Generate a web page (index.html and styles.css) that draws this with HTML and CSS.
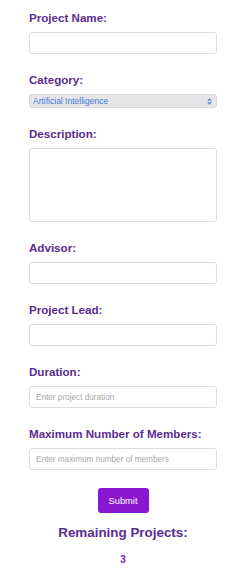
FILE: index.html
```html
<!DOCTYPE html>
<html>

<head>
    <title>New Project</title>
    <link rel="stylesheet" href="styles.css">
</head>

<body>
    <div class="wrapper">
        <form class="project_form" onsubmit="return false">
            <div class="field">
                <label for="name">Project Name:</label>
                <input type="text" id="name">
            </div>
            <div class="field">
                <label for="category">Category:</label>
                <div class="select_box">
                    <select id="category">
                        <option>Artificial Intelligence</option>
                        <option>Web Development</option>
                        <option>Data Science</option>
                    </select>
                    <svg class="chevron" width="5" height="7" viewBox="0 0 5 7">
                        <path d="M0.8 2.8 L2.5 1 L4.2 2.8 M0.8 4.2 L2.5 6 L4.2 4.2" fill="none" stroke="#4a7fd6" stroke-width="1.1" />
                    </svg>
                </div>
            </div>
            <div class="field">
                <label for="desc">Description:</label>
                <textarea id="desc"></textarea>
            </div>
            <div class="field">
                <label for="advisor">Advisor:</label>
                <input type="text" id="advisor">
            </div>
            <div class="field">
                <label for="lead">Project Lead:</label>
                <input type="text" id="lead">
            </div>
            <div class="field">
                <label for="duration">Duration:</label>
                <input type="text" id="duration" placeholder="Enter project duration">
            </div>
            <div class="field">
                <label for="members">Maximum Number of Members:</label>
                <input type="number" id="members" placeholder="Enter maximum number of members">
            </div>
            <button class="submit_btn" type="submit">Submit</button>
        </form>
        <h2 class="remaining_title">Remaining Projects:</h2>
        <p class="remaining_count">3</p>
    </div>
</body>

</html>
```

FILE: styles.css
```css
body {
    margin: 0;
    background-color: #fff;
    font-family: "Liberation Sans", Arial, sans-serif;
}

.wrapper {
    width: 188px;
    margin: 0 0 0 17px;
    padding: 10px 11px 0 12px;
    border-top: 1px solid #eef1f5;
    margin-top: -1px;
}

.field {
    margin-bottom: 18px;
}

.field label {
    display: block;
    font-size: 11.6px;
    font-weight: bold;
    line-height: 16px;
    color: #5a2c8f;
    margin-bottom: 6px;
}

.field input,
.field textarea {
    display: block;
    width: 188px;
    height: 22px;
    box-sizing: border-box;
    border: 1px solid #dedede;
    border-radius: 3px;
    padding: 0 6px;
    font-family: "Liberation Sans", Arial, sans-serif;
    font-size: 8.2px;
    background-color: #fff;
    outline: none;
}

.field input::placeholder {
    color: #a9a9a9;
}

.field input[type=number] {
    -moz-appearance: textfield;
}

.field input::-webkit-outer-spin-button,
.field input::-webkit-inner-spin-button {
    -webkit-appearance: none;
    margin: 0;
}

.field textarea {
    height: 74px;
    resize: none;
}

.select_box {
    position: relative;
}

.select_box select {
    display: block;
    width: 188px;
    height: 14px;
    box-sizing: border-box;
    -webkit-appearance: none;
    appearance: none;
    background-color: #e6e6e9;
    border: 1px solid #d9d9dc;
    border-radius: 3px;
    padding: 0 0 0 3px;
    font-family: "Liberation Sans", Arial, sans-serif;
    font-size: 8.5px;
    line-height: 12px;
    color: #3f7bd6;
    outline: none;
}

.chevron {
    position: absolute;
    right: 5px;
    top: 3.5px;
}

.submit_btn {
    display: block;
    margin: 14px auto 0;
    width: 51px;
    height: 25px;
    border: none;
    border-radius: 3px;
    background-color: #8a17d0;
    color: #fff;
    font-family: "Liberation Sans", Arial, sans-serif;
    font-size: 9.3px;
    padding: 0;
    cursor: pointer;
}

.remaining_title {
    margin: 12px 0 0;
    text-align: center;
    font-size: 13.4px;
    line-height: 16px;
    color: #5a2c8f;
}

.remaining_count {
    margin: 13px 0 0;
    text-align: center;
    font-size: 10px;
    line-height: 12px;
    font-weight: bold;
    color: #7a23bf;
}
```
